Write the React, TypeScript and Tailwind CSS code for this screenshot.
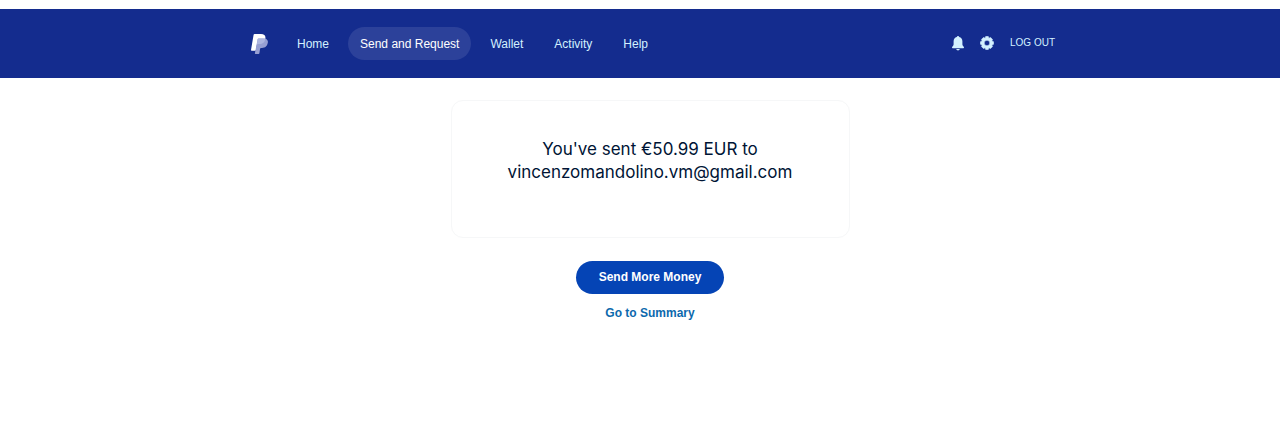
const links = [
  { label: 'Home', href: '#home' },
  { label: 'Send and Request', href: '#transfer', active: true },
  { label: 'Wallet', href: '#wallet' },
  { label: 'Activity', href: '#activity' },
  { label: 'Help', href: '#help' },
];

function Logo() {
  return (
    <svg viewBox="0 0 17 20" className="h-5 w-[17px]" aria-hidden="true">
      <path
        d="M2.600.8C2.700.3 3.100 0 3.600 0h6.400c3.300 0 4.700 1.600 4.400 4.200C13.900 8.200 11.700 10 8.400 10H6.800c-.5 0-.8.3-.9.800L5 16.100c-.1.400-.4.700-.8.700H.600c-.4 0-.6-.3-.6-.7z"
        fill="#fff"
      />
      <path
        d="M6.600 5.200c.1-.5.500-.8 1-.8h4.700c3.100 0 4.900 1.400 4.600 3.900-.5 3.700-2.800 5.700-5.900 5.700h-1c-.5 0-.8.300-.9.800L8.400 19.300c-.1.400-.4.700-.8.700H4.400c-.4 0-.6-.3-.5-.7z"
        fill="#979fd2"
      />
      <path
        d="M6.600 5.200c.1-.5.500-.8 1-.8h6.800C13.900 8.200 11.700 10 8.400 10H6.800c-.5 0-.8.3-.9.800z"
        fill="#aeb6df"
      />
    </svg>
  );
}

function BellIcon() {
  return (
    <svg viewBox="0 0 12 15" className="h-[15px] w-3" fill="currentColor" aria-hidden="true">
      <path d="M6 0c.7 0 1.100.4 1.200 1.100C9.200 1.600 10.400 3.200 10.400 5.300v3.200c0 .8.400 1.400 1.100 2 .3.300.5.600.5 1 0 .4-.3.700-.7.700H.7c-.4 0-.7-.3-.7-.7 0-.4.200-.7.500-1 .7-.6 1.100-1.200 1.100-2V5.300c0-2.100 1.200-3.700 3.200-4.200C4.900.4 5.300 0 6 0z" />
      <path d="M4.200 13h3.600c-.2.900-.9 1.400-1.800 1.400S4.400 13.900 4.200 13z" />
    </svg>
  );
}

function GearIcon() {
  return (
    <svg viewBox="0 0 14 14" className="size-3.5" fill="currentColor" aria-hidden="true">
      <path
        fillRule="evenodd"
        d="M5.700.5h2.600l.6 1.700 1.700-.7 1.900 1.900-.7 1.700 1.700.6v2.600l-1.700.6.7 1.700-1.900 1.900-1.700-.7-.6 1.700H5.700l-.6-1.700-1.700.7-1.900-1.900.7-1.700L.5 8.300V5.700l1.700-.6-.7-1.700 1.900-1.900 1.700.7zM7 4.200a2.800 2.800 0 1 0 0 5.600 2.800 2.800 0 0 0 0-5.600z"
        stroke="currentColor"
        strokeWidth="0.6"
        strokeLinejoin="round"
      />
    </svg>
  );
}

function Header() {
  return (
    <header className="bg-[#142c8e] py-[18px] pl-[26px]">
      <div className="mx-auto flex max-w-[804px] items-center justify-between">
        <div className="flex items-center gap-[17px]">
          <a href="#home" aria-label="PayPal">
            <Logo />
          </a>
          <nav className="flex gap-[7px]">
            {links.map((link) => (
              <a
                key={link.label}
                href={link.href}
                aria-current={link.active ? 'page' : undefined}
                className={
                  link.active
                    ? 'rounded-full bg-[#2c419a] px-3 pt-px text-xs leading-8 font-medium text-white'
                    : 'rounded-full px-3 pt-px text-xs leading-8 font-medium text-[#d3f1ff]'
                }
              >
                {link.label}
              </a>
            ))}
          </nav>
        </div>
        <div className="flex items-center gap-4 pb-px text-[#d3f1ff]">
          <button type="button" aria-label="Notifications">
            <BellIcon />
          </button>
          <a href="#settings" aria-label="Settings">
            <GearIcon />
          </a>
          <a href="#logout" className="text-[10px] leading-4">
            LOG OUT
          </a>
        </div>
      </div>
    </header>
  );
}

export default function App() {
  return (
    <div className="min-h-screen bg-white pt-[9px] font-['Liberation_Sans',Arial,sans-serif]">
      <Header />
      <main className="flex flex-col items-center pt-[22px] pl-5">
        <section className="w-full max-w-[399px] rounded-xl border border-[#f6f7f8] px-6 pt-[37px] pb-[53px]">
          <h1 className="text-center font-['Inter',sans-serif] text-[17px] leading-[23px] text-[#001435]">
            You've sent €50.99 EUR to
            <br />
            vincenzomandolino.vm@gmail.com
          </h1>
        </section>
        <button
          type="button"
          className="mt-[23px] rounded-full bg-[#0544b5] px-[23px] text-xs leading-[33px] font-bold text-white"
        >
          Send More Money
        </button>
        <a href="#summary" className="mt-[11px] text-xs leading-4 font-bold text-[#0c69ad]">
          Go to Summary
        </a>
      </main>
    </div>
  );
}
